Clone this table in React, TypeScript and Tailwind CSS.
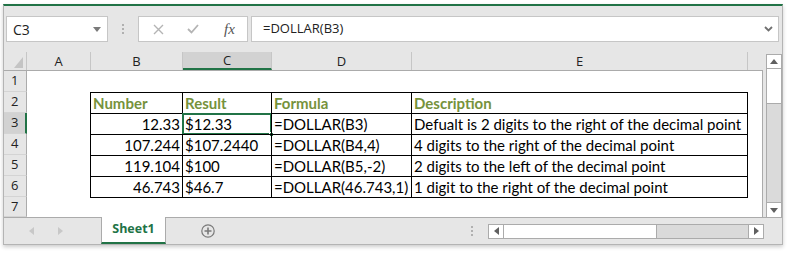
import React from 'react';

type Cell = { text?: string; align?: 'left' | 'right'; head?: boolean };

const widths = [63, 92, 89, 140, 337, 15];
const letters = ['A', 'B', 'C', 'D', 'E', ''];

const table: Cell[][] = [
  [{ text: 'Number', head: true }, { text: 'Result', head: true }, { text: 'Formula', head: true }, { text: 'Description', head: true }],
  [{ text: '12.33', align: 'right' }, { text: '$12.33' }, { text: '=DOLLAR(B3)' }, { text: 'Defualt is 2 digits to the right of the decimal point' }],
  [{ text: '107.244', align: 'right' }, { text: '$107.2440' }, { text: '=DOLLAR(B4,4)' }, { text: '4 digits to the right of the decimal point' }],
  [{ text: '119.104', align: 'right' }, { text: '$100' }, { text: '=DOLLAR(B5,-2)' }, { text: '2 digits to the left of the decimal point' }],
  [{ text: '46.743', align: 'right' }, { text: '$46.7' }, { text: '=DOLLAR(46.743,1)' }, { text: '1 digit to the right of the decimal point' }],
];

function Row({ n, h }: { n: number; h: number }) {
  const data = n >= 2 && n <= 6 ? table[n - 2] : null;
  const closing = n === 7;
  const active = n === 3;
  return (
    <div className="flex" style={{ height: h }}>
      <div
        className={`w-[23px] shrink-0 border-b border-b-[#d4d4d4] pl-[7px] flex items-center text-[13px] text-[#222] ${
          active ? 'bg-[#d2d2d2] border-r-2 border-r-[#217346]' : 'bg-[#e6e6e6] border-r border-r-[#ababab]'
        }`}
        style={{ fontFamily: '"Open Sans", sans-serif' }}
      >
        {n}
      </div>
      <div className="w-[63px] shrink-0" />
      {[1, 2, 3, 4].map((ci) => {
        const c = data ? data[ci - 1] : null;
        const isE = ci === 4;
        return (
          <div
            key={ci}
            className={`relative shrink-0 flex items-end pb-[1px] leading-[18px] text-[15px] whitespace-nowrap ${
              data ? 'border-l border-t border-black' : closing ? 'border-t border-black' : ''
            } ${data && isE ? 'border-r' : ''} ${c?.align === 'right' ? 'justify-end pr-[2px]' : 'pl-[2px]'} ${
              c?.head ? 'font-bold text-[#76923c]' : 'text-black'
            }`}
            style={{ width: widths[ci], fontFamily: 'Lato, sans-serif' }}
          >
            {c?.text}
            {active && ci === 2 && (
              <>
                <div className="absolute -left-[1px] -top-[1px] -right-[1px] -bottom-[1px] border-2 border-[#217346]" />
                <div className="absolute -right-[3px] -bottom-[3px] w-[5px] h-[5px] bg-[#217346] border border-white" />
              </>
            )}
          </div>
        );
      })}
      <div className="w-[15px] shrink-0 border-r border-[#ababab]" />
    </div>
  );
}

function Tri({ dir, className = '' }: { dir: 'up' | 'down' | 'left' | 'right'; className?: string }) {
  const vert = dir === 'up' || dir === 'down';
  const pts = {
    up: '0,5 8,5 4,0',
    down: '0,0 8,0 4,5',
    left: '5,0 5,8 0,4',
    right: '0,0 0,8 5,4',
  }[dir];
  return (
    <svg viewBox={vert ? '0 0 8 5' : '0 0 5 8'} width={vert ? 8 : 5} height={vert ? 5 : 8} className={className}>
      <polygon points={pts} fill="currentColor" />
    </svg>
  );
}

export default function App() {
  return (
    <div className="w-[790px] h-[256px] bg-white pt-[4px] pl-[3px]">
      <div className="w-[780px] bg-[#e6e6e6] border-t-2 border-t-[#217346] border-x border-b border-[#b4b4b4] shadow-[0_2px_4px_rgba(0,0,0,0.2)]">
        {/* formula bar */}
        <div className="mt-[10px] h-[26px] flex">
          <div
            className="ml-[2px] w-[102px] bg-white border border-[#c6c6c6] flex items-center justify-between pl-[6px] pr-[6px] text-[14px] text-[#222]"
            style={{ fontFamily: '"Open Sans", sans-serif' }}
          >
            <span>C3</span>
            <Tri dir="down" className="text-[#7a7a7a]" />
          </div>
          <div className="w-[30px] flex flex-col items-center justify-center gap-[2px]">
            <span className="w-[2px] h-[2px] bg-[#b0b0b0]" />
            <span className="w-[2px] h-[2px] bg-[#b0b0b0]" />
            <span className="w-[2px] h-[2px] bg-[#b0b0b0]" />
          </div>
          <div className="w-[110px] bg-white border border-[#c6c6c6] flex items-center">
            <svg width="11" height="11" viewBox="0 0 11 11" className="ml-[14px]">
              <path d="M1 1 L10 10 M10 1 L1 10" stroke="#b4b4b4" strokeWidth="1.4" />
            </svg>
            <svg width="12" height="10" viewBox="0 0 12 10" className="ml-[23px]">
              <path d="M1 5 L4.5 8.5 L11 1" stroke="#b4b4b4" strokeWidth="1.8" fill="none" />
            </svg>
            <span className="ml-[25px] italic text-[15px] text-[#555] leading-none" style={{ fontFamily: '"Liberation Serif", serif' }}>
              fx
            </span>
          </div>
          <div
            className="ml-[3px] w-[528px] bg-white border border-[#c6c6c6] flex items-center justify-between pl-[11px] pr-[5px] text-[13px] text-[#222]"
            style={{ fontFamily: '"Open Sans", sans-serif' }}
          >
            <span>=DOLLAR(B3)</span>
            <svg width="9" height="6" viewBox="0 0 9 6">
              <path d="M1 1 L4.5 4.5 L8 1" stroke="#707070" strokeWidth="1.8" fill="none" />
            </svg>
          </div>
        </div>

        {/* grid */}
        <div className="mt-[10px] flex">
          <div className="w-[759px] bg-white">
            <div className="h-[19px] flex bg-[#e6e6e6] border-b border-[#ababab] text-[13px] text-[#222]" style={{ fontFamily: '"Open Sans", sans-serif' }}>
              <div className="w-[23px] border-r border-[#c6c6c6] relative">
                <svg width="9" height="11" viewBox="0 0 9 11" className="absolute right-[3px] bottom-[2px]">
                  <polygon points="9,0 9,11 0,11" fill="#c4c4c4" />
                </svg>
              </div>
              {letters.map((l, i) => (
                <div
                  key={i}
                  className={`flex items-center justify-center leading-none ${
                    i === 2 ? 'bg-[#d2d2d2] border-b-2 border-b-[#217346]' : ''
                  } ${i < 5 ? 'border-r border-r-[#c6c6c6]' : ''}`}
                  style={{ width: i === 0 ? 64 : i === 4 ? 336 : i === 5 ? 14 : widths[i] }}
                >
                  {l}
                </div>
              ))}
            </div>
            {[1, 2, 3, 4, 5, 6, 7].map((n) => (
              <Row key={n} n={n} h={n === 7 ? 20 : 21} />
            ))}
          </div>
          {/* vertical scrollbar */}
          <div className="ml-[3px] w-[16px] mt-[2px] flex flex-col border-x border-[#ababab] bg-[#dadada]">
            <div className="h-[15px] bg-white border-y border-[#ababab] flex items-center justify-center text-[#606060]">
              <Tri dir="up" />
            </div>
            <div className="h-[35px] bg-white border-b border-[#ababab]" />
            <div className="flex-1" />
            <div className="h-[15px] bg-white border-t border-[#ababab] flex items-center justify-center text-[#606060]">
              <Tri dir="down" />
            </div>
          </div>
        </div>

        {/* sheet tabs */}
        <div className="h-[27px] flex">
          <div className="w-[97px] border-t border-[#ababab] flex items-center text-[#c8c8c8]">
            <Tri dir="left" className="ml-[25px]" />
            <Tri dir="right" className="ml-[24px]" />
          </div>
          <div
            className="w-[65px] bg-white border-x border-[#ababab] border-b-2 border-b-[#217346] flex items-center justify-center text-[12.5px] font-bold text-[#217346]"
            style={{ fontFamily: '"Open Sans", sans-serif' }}
          >
            Sheet1
          </div>
          <div className="flex-1 border-t border-[#ababab] flex items-center">
            <svg width="14" height="14" viewBox="0 0 14 14" className="ml-[35px]">
              <circle cx="7" cy="7" r="6.2" stroke="#7a7a7a" strokeWidth="1.2" fill="none" />
              <path d="M7 3.5 V10.5 M3.5 7 H10.5" stroke="#7a7a7a" strokeWidth="1.6" />
            </svg>
            <div className="ml-[256px] flex flex-col gap-[2px]">
              <span className="w-[2px] h-[2px] bg-[#b0b0b0]" />
              <span className="w-[2px] h-[2px] bg-[#b0b0b0]" />
              <span className="w-[2px] h-[2px] bg-[#b0b0b0]" />
            </div>
            <div className="ml-[15px] w-[276px] h-[15px] flex border border-[#ababab] bg-[#dadada]">
              <div className="w-[15px] bg-white border-r border-[#ababab] flex items-center justify-center text-[#606060]">
                <Tri dir="left" />
              </div>
              <div className="w-[153px] bg-white border-r border-[#ababab]" />
              <div className="flex-1" />
              <div className="w-[15px] bg-white border-l border-[#ababab] flex items-center justify-center text-[#606060]">
                <Tri dir="right" />
              </div>
            </div>
          </div>
        </div>
      </div>
    </div>
  );
}
